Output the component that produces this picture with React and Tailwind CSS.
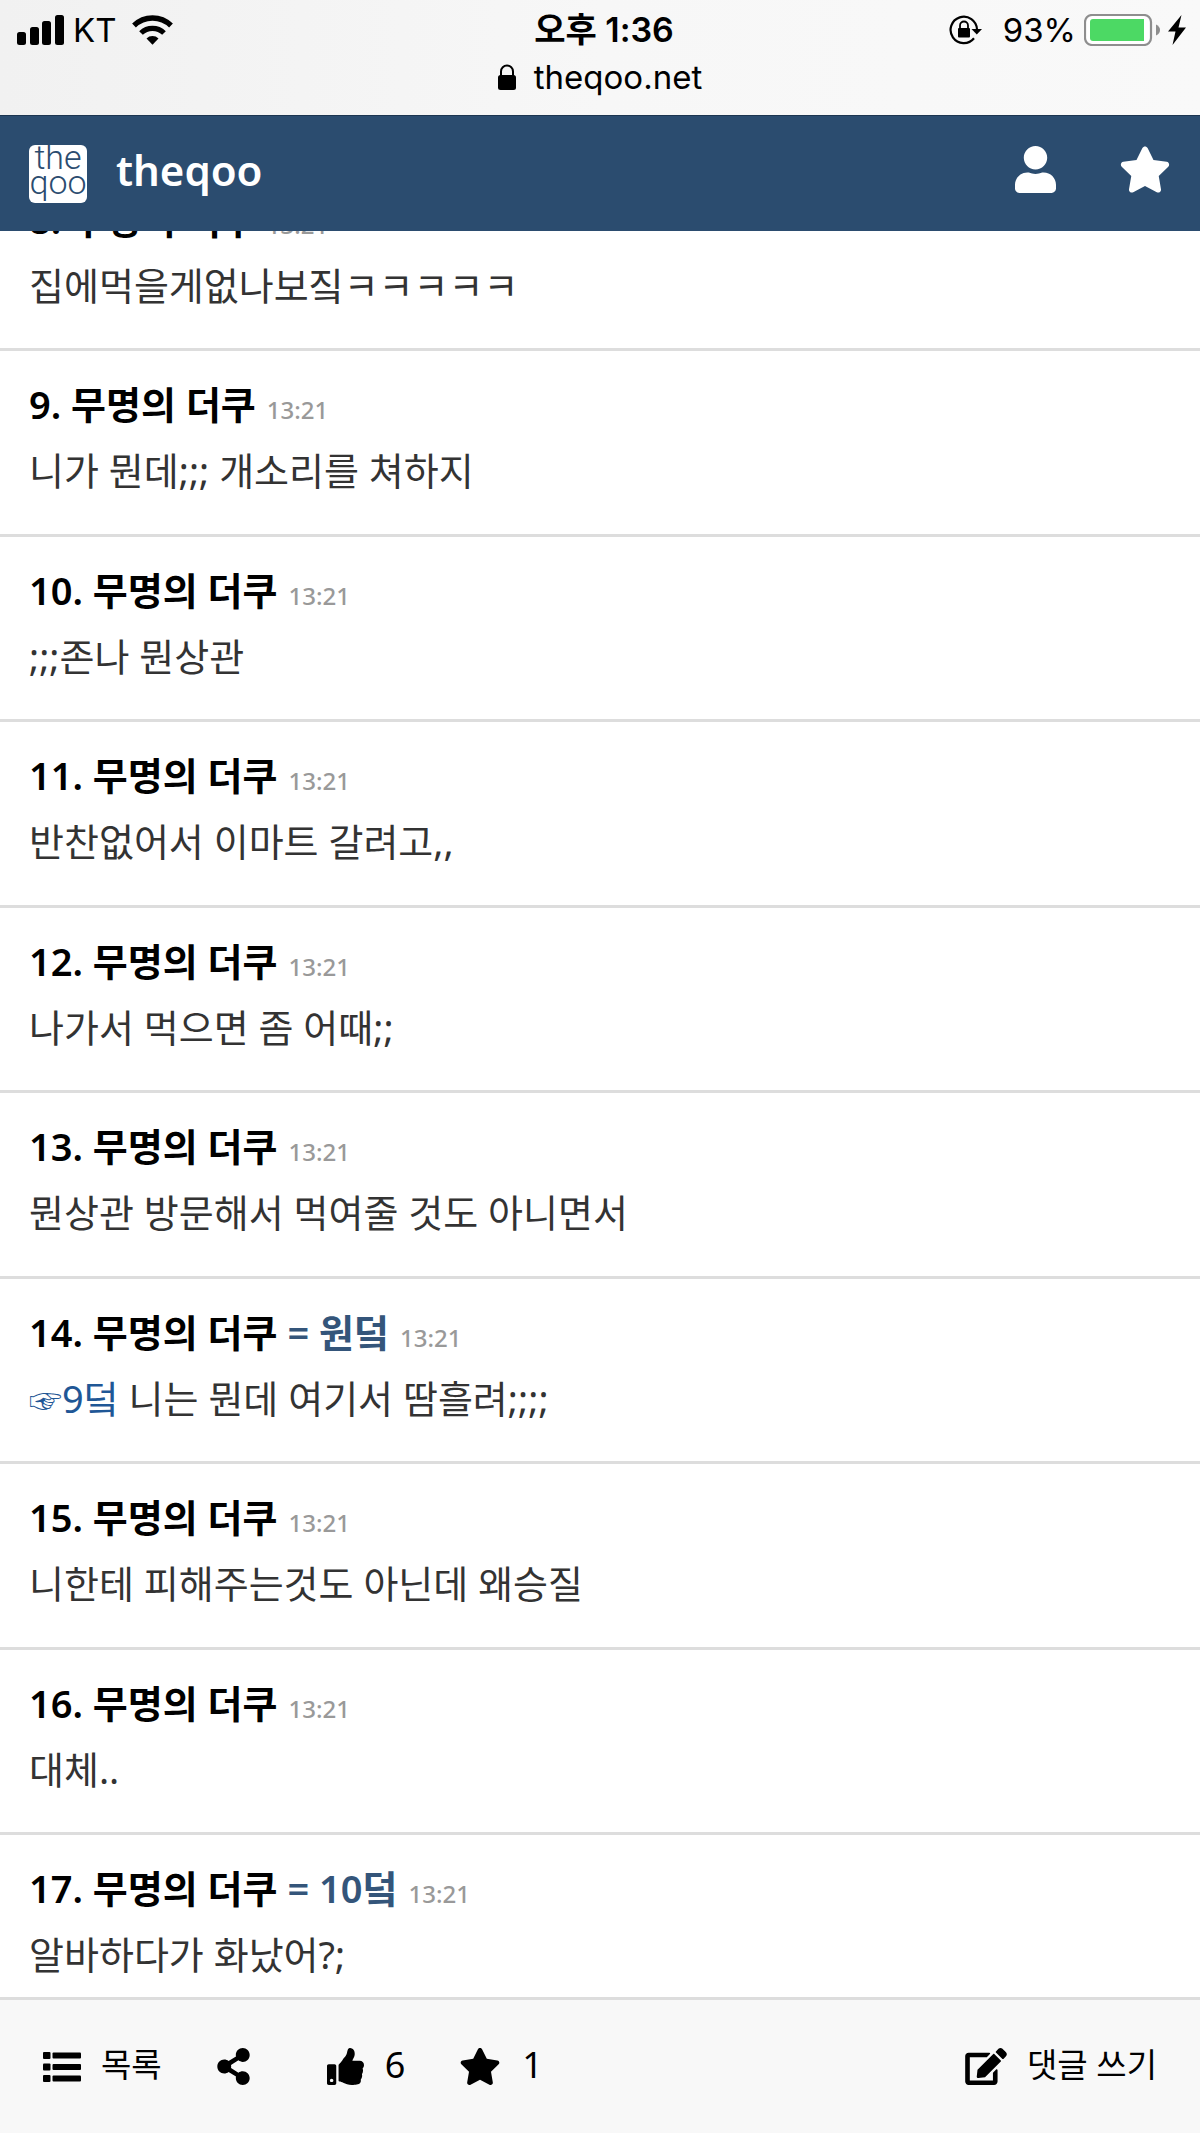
import { FaEdit, FaShareAlt, FaStar, FaThumbsUp, FaUser } from 'react-icons/fa';

const comments = [
    { no: 8, text: '집에먹을게없나보짘ㅋㅋㅋㅋㅋ' },
    { no: 9, text: '니가 뭔데;;; 개소리를 쳐하지' },
    { no: 10, text: ';;;존나 뭔상관' },
    { no: 11, text: '반찬없어서 이마트 갈려고,,' },
    { no: 12, text: '나가서 먹으면 좀 어때;;' },
    { no: 13, text: '뭔상관 방문해서 먹여줄 것도 아니면서' },
    { no: 14, same: '원덬', reply: '9덬', text: '니는 뭔데 여기서 땀흘려;;;;' },
    { no: 15, text: '니한테 피해주는것도 아닌데 왜승질' },
    { no: 16, text: '대체..' },
    { no: 17, same: '10덬', text: '알바하다가 화났어?;' },
];

function SignalIcon() {
    return (
        <svg viewBox="0 0 47 30" className="h-[30px] w-[47px]" aria-hidden="true">
            <rect x="0" y="17" width="9" height="13" rx="2.5" />
            <rect x="13" y="12" width="9" height="18" rx="2.5" />
            <rect x="25" y="6" width="9" height="24" rx="2.5" />
            <rect x="38" y="0" width="9" height="30" rx="2.5" />
        </svg>
    );
}

function WifiIcon() {
    return (
        <svg viewBox="0 0 41 30" className="h-[30px] w-[41px]" aria-hidden="true">
            <path d="M2 10.5a26.5 26.5 0 0 1 37 0" fill="none" stroke="#000" strokeWidth="5.4" />
            <path d="M9 18a16.4 16.4 0 0 1 23 0" fill="none" stroke="#000" strokeWidth="5.2" />
            <path d="M14.5 23.5a8.5 8.5 0 0 1 12 0l-6 6.2z" />
        </svg>
    );
}

function LockIcon() {
    return (
        <svg viewBox="0 0 18 26" className="h-[26px] w-[18px]" aria-hidden="true">
            <rect x="0" y="11" width="18" height="15" rx="2.5" />
            <path d="M3 12V7.5a6 6 0 0 1 12 0V12" fill="none" stroke="#000" strokeWidth="2" />
        </svg>
    );
}

function RotationLockIcon() {
    return (
        <svg viewBox="0 0 34 30" className="h-[30px] w-[34px]" aria-hidden="true">
            <path d="M28 14.5a13.2 13.2 0 1 0-3 8.8" fill="none" stroke="#000" strokeWidth="2.2" />
            <path d="M22.5 14h10.5l-5.2 5.6z" />
            <rect x="9" y="13" width="12" height="9.5" rx="1" />
            <path d="M11 13.5v-3a4 4 0 0 1 8 0v3" fill="none" stroke="#000" strokeWidth="1.8" />
        </svg>
    );
}

function BatteryIcon() {
    return (
        <svg viewBox="0 0 76 32" className="h-[32px] w-[76px]" aria-hidden="true">
            <rect x="1" y="1" width="66" height="30" rx="7" fill="#fff" stroke="#8e8e8e" strokeWidth="2.2" />
            <path d="M9 5h51v22H9a3 3 0 0 1-3-3V8a3 3 0 0 1 3-3z" fill="#4cd964" />
            <path d="M72 10.5q4 2 4 5.5t-4 5.5z" fill="#8e8e8e" />
        </svg>
    );
}

function BoltIcon() {
    return (
        <svg viewBox="0 0 18 30" className="h-[30px] w-[18px]" aria-hidden="true">
            <path d="M13.5 0 0 16.5h7.5L4.5 30 18 12.5h-7.5z" />
        </svg>
    );
}

function ListIcon() {
    return (
        <svg viewBox="0 0 38 32" className="h-[32px] w-[38px]" aria-hidden="true">
            {[1, 12.5, 24].map((y) => (
                <g key={y}>
                    <rect x="0" y={y} width="7.5" height="7" rx="1" />
                    <rect x="9.5" y={y + 0.5} width="28.5" height="6" rx="1" />
                </g>
            ))}
        </svg>
    );
}

function StatusBar() {
    return (
        <div className="h-[116px] shrink-0 border-b border-[#1c3550] bg-linear-to-r from-[#f1f1f1] via-[#f7f7f7] to-[#f9f9f9] pt-2 font-['Inter','Noto_Sans_CJK_KR',sans-serif] text-[33px] text-black">
            <div className="grid grid-cols-3 items-center px-[14px] leading-[44px]">
                <div className="flex items-center pl-[3px]">
                    <SignalIcon />
                    <span className="ml-[9px]">KT</span>
                    <span className="ml-4"><WifiIcon /></span>
                </div>
                <div className="pl-2 text-center text-[34px] font-semibold">오후 1:36</div>
                <div className="flex items-center justify-end">
                    <RotationLockIcon />
                    <span className="ml-5 mr-2">93%</span>
                    <BatteryIcon />
                    <span className="ml-2"><BoltIcon /></span>
                </div>
            </div>
            <div className="flex items-center justify-center gap-[18px] leading-[50px]">
                <LockIcon />
                <span>theqoo.net</span>
            </div>
        </div>
    );
}

function SiteHeader() {
    return (
        <header className="z-10 flex h-[115px] shrink-0 items-center bg-[#2b4c6f] px-[29px] text-white">
            <a href="#home" className="flex items-center gap-[29px]">
                <span className="flex size-[58px] flex-col items-center overflow-hidden rounded-md bg-white font-['Roboto',sans-serif] text-[34px] font-light leading-[25px] text-[#2b4c6f]">
                    <span>the</span>
                    <span>qoo</span>
                </span>
                <span className="pb-2 text-[42px] font-semibold leading-[58px]">theqoo</span>
            </a>
            <div className="ml-auto flex items-center gap-[63px] pb-2">
                <button type="button" aria-label="내 정보">
                    <FaUser className="h-[47px] w-[41px]" />
                </button>
                <button type="button" aria-label="즐겨찾기">
                    <FaStar className="h-[47px] w-[52px]" />
                </button>
            </div>
        </header>
    );
}

function Comment({ no, same, reply, text }) {
    return (
        <li className="border-b-3 border-[#dddddd] px-[29px] pt-[26px] pb-[33px] even:pb-[34px]">
            <div className="flex items-baseline gap-[11px]">
                <h3 className="text-[38px] font-semibold leading-[54px] text-black">
                    {no}. 무명의 더쿠
                    {same && <span className="text-[#34557a]"> = {same}</span>}
                </h3>
                <time className="text-[24px] font-medium leading-none text-[#999999]">13:21</time>
            </div>
            <p className="mt-[9px] text-[38px] leading-[60px] text-[#333333]">
                {reply && (
                    <>
                        <a href="#comment-9" className="text-[#1f5796]">
                            <span className="text-[33px] leading-none">☞</span>{reply}
                        </a>{' '}
                    </>
                )}
                {text}
            </p>
        </li>
    );
}

function Toolbar() {
    return (
        <footer className="z-10 flex h-[136px] shrink-0 items-center justify-between border-t-3 border-[#dddddd] bg-[#f8f8f8] px-[43px] text-[33px] text-black">
            <div className="flex items-center">
                <button type="button" className="flex items-center gap-5">
                    <ListIcon />
                    <span className="pb-1">목록</span>
                </button>
                <button type="button" aria-label="공유" className="ml-[55px]">
                    <FaShareAlt className="h-[37px] w-[33px]" />
                </button>
                <button type="button" aria-label="추천" className="ml-[77px] flex items-center gap-[21px]">
                    <FaThumbsUp className="size-[37px]" />
                    <span className="pb-1 text-[36px]">6</span>
                </button>
                <button type="button" aria-label="스크랩" className="ml-[54px] flex items-center gap-[21px]">
                    <FaStar className="h-[37px] w-[42px]" />
                    <span className="pb-1 text-[36px]">1</span>
                </button>
            </div>
            <button type="button" className="flex items-center gap-5">
                <FaEdit className="h-[37px] w-[42px]" />
                <span className="pb-1">댓글 쓰기</span>
            </button>
        </footer>
    );
}

export default function App() {
    return (
        <div className="flex h-screen flex-col bg-white font-['Noto_Sans','Noto_Sans_CJK_KR',sans-serif]">
            <StatusBar />
            <SiteHeader />
            {/* The list is scrolled a little, so the first comment starts under the header */}
            <main className="min-h-0 flex-1 overflow-hidden">
                <ul className="-mt-[65px]">
                    {comments.map((comment) => (
                        <Comment key={comment.no} {...comment} />
                    ))}
                </ul>
            </main>
            <Toolbar />
        </div>
    );
}
